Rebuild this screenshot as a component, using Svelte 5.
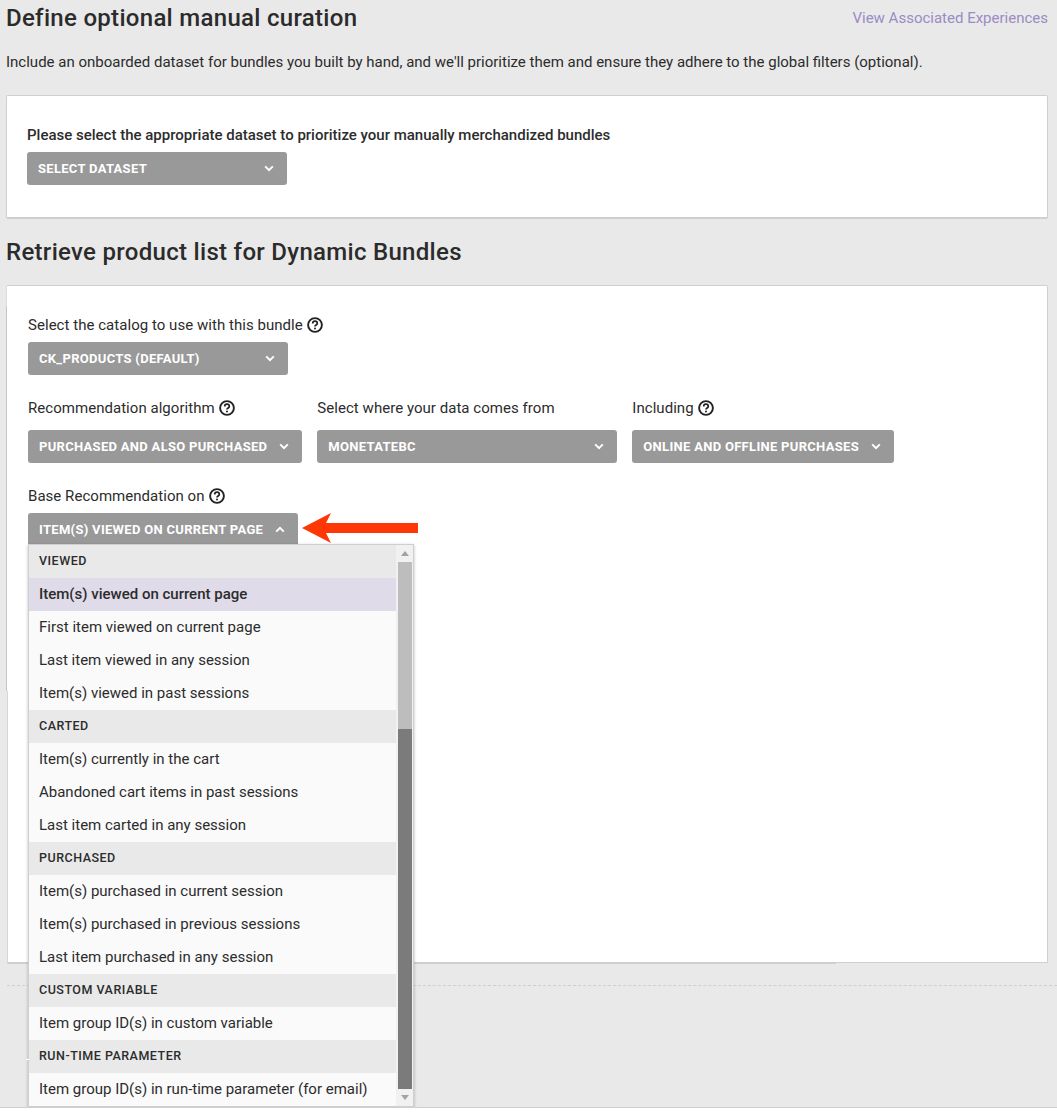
<script>
  const groups = [
    { title: 'Viewed', items: ['Item(s) viewed on current page', 'First item viewed on current page', 'Last item viewed in any session', 'Item(s) viewed in past sessions'] },
    { title: 'Carted', items: ['Item(s) currently in the cart', 'Abandoned cart items in past sessions', 'Last item carted in any session'] },
    { title: 'Purchased', items: ['Item(s) purchased in current session', 'Item(s) purchased in previous sessions', 'Last item purchased in any session'] },
    { title: 'Custom variable', items: ['Item group ID(s) in custom variable'] },
    { title: 'Run-time parameter', items: ['Item group ID(s) in run-time parameter (for email)'] }
  ];
  const selected = 'Item(s) viewed on current page';
</script>

{#snippet help()}
  <svg class="help" width="16" height="16" viewBox="0 0 16 16" fill="none">
    <circle cx="8" cy="8" r="6.9" stroke="#222" stroke-width="1.9" />
    <path d="M5.7 6.5a2.3 2.3 0 0 1 4.6 0c0 1.5-2.3 1.6-2.3 3" stroke="#222" stroke-width="1.7" />
    <circle cx="8" cy="11.6" r="1" fill="#222" />
  </svg>
{/snippet}

{#snippet chevron(up)}
  <svg class="chev" width="10" height="7" viewBox="0 0 10 7" fill="none">
    <path d={up ? 'M1.2 5.6 5 1.8l3.8 3.8' : 'M1.2 1.4 5 5.2l3.8-3.8'} stroke="#fff" stroke-width="2" />
  </svg>
{/snippet}

<div class="page">
  <header class="top">
    <h2>Define optional manual curation</h2>
    <a href="#top">View Associated Experiences</a>
  </header>
  <p class="intro">Include an onboarded dataset for bundles you built by hand, and we'll prioritize them and ensure they adhere to the global filters (optional).</p>

  <section class="card first">
    <div class="label strong">Please select the appropriate dataset to prioritize your manually merchandized bundles</div>
    <button type="button" class="select w260">SELECT DATASET {@render chevron(false)}</button>
  </section>

  <h2 class="second">Retrieve product list for Dynamic Bundles</h2>

  <section class="card main">
    <div class="label">Select the catalog to use with this bundle {@render help()}</div>
    <button type="button" class="select w260">CK_PRODUCTS (DEFAULT) {@render chevron(false)}</button>

    <div class="fields">
      <div>
        <div class="label">Recommendation algorithm {@render help()}</div>
        <button type="button" class="select">PURCHASED AND ALSO PURCHASED {@render chevron(false)}</button>
      </div>
      <div class="source">
        <div class="label">Select where your data comes from</div>
        <button type="button" class="select w300">MONETATEBC {@render chevron(false)}</button>
      </div>
      <div>
        <div class="label">Including {@render help()}</div>
        <button type="button" class="select">ONLINE AND OFFLINE PURCHASES {@render chevron(false)}</button>
      </div>
    </div>

    <div class="label base">Base Recommendation on {@render help()}</div>
    <div class="anchor">
      <button type="button" class="select open">ITEM(S) VIEWED ON CURRENT PAGE {@render chevron(true)}</button>
      <svg class="arrow" width="116" height="30" viewBox="0 0 116 30">
        <path d="M0 15 29 0 24 10H116V20H24L29 30Z" fill="#ff3705" />
      </svg>
      <div class="menu">
        <div class="list">
          {#each groups as g}
            <div class="group">{g.title}</div>
            {#each g.items as item}
              <div class="item" class:selected={item === selected}>{item}</div>
            {/each}
          {/each}
        </div>
        <div class="scrollbar">
          <span class="tri up"></span>
          <span class="thumb light"></span>
          <span class="thumb dark"></span>
          <span class="tri down"></span>
        </div>
      </div>
    </div>
    <span class="edge-lower"></span>
    <span class="edge-bottom"></span>
  </section>

  <div class="dashes"></div>
  <span class="tick"></span>
</div>

<style>
  :global(body) {
    background: #fff;
  }
  .page {
    position: relative;
    box-sizing: border-box;
    height: 1108px;
    margin-bottom: 10px;
    padding: 0 9px 0 6px;
    background: #e9e9e9;
    border-bottom: 1px solid #cfcfcf;
    font-family: Roboto, "Liberation Sans", sans-serif;
    color: #2c2c2c;
    overflow: hidden;
  }
  .top {
    display: flex;
    justify-content: space-between;
    align-items: center;
    height: 36px;
  }
  h2 {
    margin: 0;
    font-size: 24px;
    font-weight: 500;
    letter-spacing: 0.3px;
    color: #2b2b2b;
  }
  .top a {
    font-size: 15px;
    color: #9a8cc4;
    text-decoration: none;
  }
  .intro {
    margin: 17px 0 0;
    font-size: 15px;
    line-height: 19px;
  }
  .card {
    box-sizing: border-box;
    background: #fff;
    border: 1px solid #cfcfcf;
    border-bottom-width: 2px;
    border-radius: 2px;
  }
  .first {
    height: 124px;
    margin-top: 23px;
    padding: 29px 20px 0;
  }
  .second {
    margin-top: 17px;
    line-height: 32px;
  }
  .main {
    position: relative;
    height: 679px;
    margin-top: 17px;
    padding: 29px 21px 0;
    border-left-color: #dcdcdc;
  }
  /* the left edge steps in by a pixel under y=691, and the thick bottom stops at x=836 */
  .main::before {
    content: "";
    position: absolute;
    left: -1px;
    top: 21px;
    width: 1px;
    height: 384px;
    background: #c4c4c4;
  }
  .edge-lower {
    position: absolute;
    left: -1px;
    top: 405px;
    bottom: -2px;
    width: 1px;
    background: #e9e9e9;
    border-right: 1px solid #d6d6d6;
  }
  .edge-bottom {
    position: absolute;
    left: 829px;
    right: -1px;
    bottom: -2px;
    height: 1px;
    background: #e9e9e9;
  }
  .label {
    display: flex;
    align-items: center;
    gap: 4px;
    height: 20px;
    margin-bottom: 7px;
    font-size: 15px;
    letter-spacing: 0.04px;
  }
  .strong {
    font-weight: 500;
    letter-spacing: 0;
  }
  .help {
    flex: none;
  }
  .select {
    display: inline-flex;
    align-items: center;
    justify-content: space-between;
    box-sizing: border-box;
    height: 33px;
    padding: 0 13px 0 11px;
    gap: 12px;
    background: #999;
    border: 0;
    border-radius: 3px;
    color: #fff;
    font: 700 13px Roboto, "Liberation Sans", sans-serif;
    letter-spacing: 0.3px;
    white-space: nowrap;
  }
  .w260 {
    width: 260px;
  }
  .w300 {
    width: 300px;
  }
  .source {
    width: 300px;
  }
  .chev {
    flex: none;
  }
  .fields {
    display: flex;
    gap: 15px;
    margin-top: 23px;
  }
  .fields .label {
    margin-bottom: 12px;
  }
  .base {
    margin-top: 23px;
    margin-bottom: 7px;
  }
  .anchor {
    position: relative;
  }
  .open {
    border-radius: 3px 3px 0 0;
  }
  .arrow {
    position: absolute;
    left: 274px;
    top: 0;
  }
  .menu {
    position: absolute;
    left: 0;
    top: 31px;
    box-sizing: border-box;
    display: flex;
    width: 386px;
    height: 563px;
    background: #fafafa;
    border: 1px solid #cfcfcf;
    box-shadow: 0 1px 3px rgba(0, 0, 0, 0.25);
  }
  .list {
    width: 367px;
  }
  .group,
  .item {
    box-sizing: border-box;
    display: flex;
    align-items: center;
    height: 33px;
    padding: 0 0 2px 10px;
    font-size: 15px;
  }
  .group {
    background: #e9e9e9;
    font-size: 12.5px;
    font-weight: 500;
    letter-spacing: 0.5px;
    text-transform: uppercase;
  }
  .item.selected {
    background: #dfdbe8;
    font-weight: 500;
  }
  .scrollbar {
    flex: 1;
    display: flex;
    flex-direction: column;
    align-items: center;
    background: #f1f1f1;
  }
  .thumb {
    width: 14px;
  }
  .light {
    height: 167px;
    background: #bdbdbd;
  }
  .dark {
    flex: 1;
    background: #7b7b7b;
  }
  .tri {
    flex: none;
    width: 0;
    height: 0;
    margin: 6px 0;
    border-left: 4px solid transparent;
    border-right: 4px solid transparent;
  }
  .up {
    border-bottom: 5px solid #a3a3a3;
  }
  .down {
    border-top: 5px solid #a3a3a3;
  }
  .dashes {
    margin-top: 21px;
    margin-right: -9px;
    margin-left: 1px;
    border-top: 1px dashed #cfcfcf;
  }
  .tick {
    position: absolute;
    left: 26px;
    top: 1059px;
    width: 3px;
    height: 1px;
    background: #fff;
  }
</style>
